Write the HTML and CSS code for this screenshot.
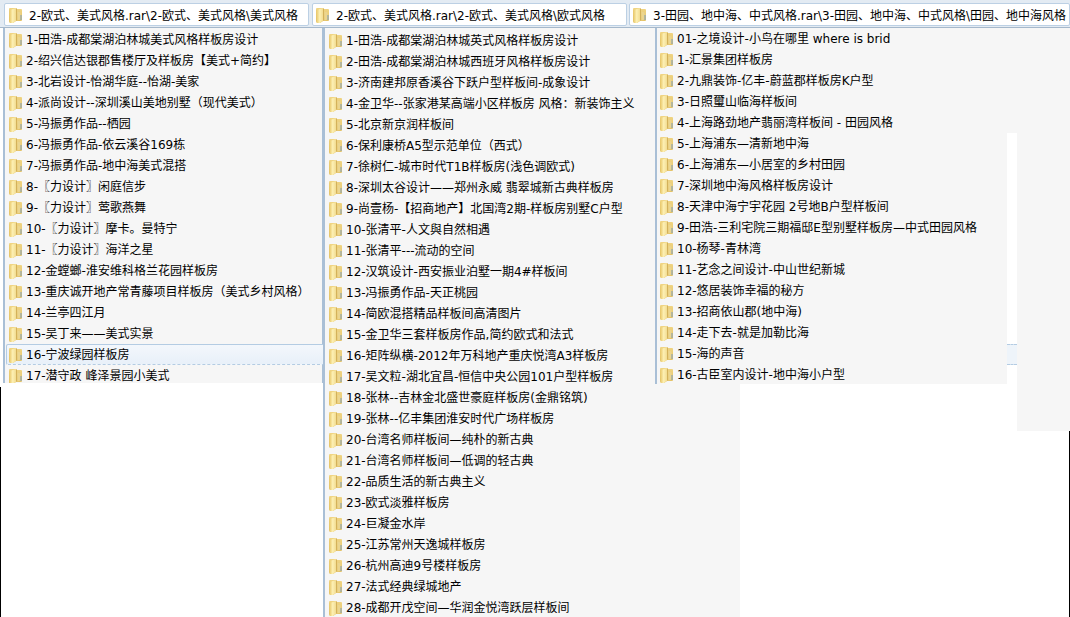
FILE: index.html
```html
<!DOCTYPE html>
<html lang="zh">
<head>
<meta charset="utf-8">
<title>Folders</title>
<link rel="stylesheet" href="styles.css">
</head>
<body>
<svg class="defs" width="0" height="0" aria-hidden="true">
  <defs>
    <linearGradient id="fg" x1="0" y1="0" x2="1" y2="0">
      <stop offset="0" stop-color="#e9c96c"/>
      <stop offset="0.45" stop-color="#fdf0b4"/>
      <stop offset="1" stop-color="#f0d98c"/>
    </linearGradient>
    <linearGradient id="bk" x1="0" y1="0" x2="0" y2="1">
      <stop offset="0" stop-color="#f0d584"/>
      <stop offset="1" stop-color="#e2c064"/>
    </linearGradient>
    <symbol id="folder" viewBox="0 0 13 16">
      <path d="M1 1h5.500l1 1H12a1 1 0 0 1 1 1v10a1 1 0 0 1-1 1H7l-3 2H2a2 2 0 0 1-2-2V2a1 1 0 0 1 1-1z" fill="url(#bk)"/>
      <path d="M0.500 3L7.500 1v12.500L4 16H2a1.500 1.500 0 0 1-1.500-1.500z" fill="url(#fg)"/>
      <path d="M7.500 1.500v12" stroke="#d3b15a" stroke-width="1"/>
      <path d="M8.500 4.500l3 1v7l-3 1z" fill="#ebd58f"/>
      <path d="M12 8v5" stroke="#7f9fbd" stroke-width="1"/>
    </symbol>
  </defs>
</svg>
<main class="desktop">
  <section class="window win-1">
    <header class="bar"><div class="tab"><svg class="ico"><use href="#folder"/></svg><span>2-欧式、美式风格.rar\2-欧式、美式风格\美式风格</span></div></header>
    <ul class="list">
      <li><svg class="ico"><use href="#folder"/></svg>1-田浩-成都棠湖泊林城美式风格样板房设计</li>
      <li><svg class="ico"><use href="#folder"/></svg>2-绍兴信达银郡售楼厅及样板房【美式+简约】</li>
      <li><svg class="ico"><use href="#folder"/></svg>3-北岩设计-怡湖华庭--怡湖-美家</li>
      <li><svg class="ico"><use href="#folder"/></svg>4-派尚设计--深圳溪山美地别墅（现代美式）</li>
      <li><svg class="ico"><use href="#folder"/></svg>5-冯振勇作品--栖园</li>
      <li><svg class="ico"><use href="#folder"/></svg>6-冯振勇作品-依云溪谷169栋</li>
      <li><svg class="ico"><use href="#folder"/></svg>7-冯振勇作品-地中海美式混搭</li>
      <li><svg class="ico"><use href="#folder"/></svg>8-〖力设计〗闲庭信步</li>
      <li><svg class="ico"><use href="#folder"/></svg>9-〖力设计〗莺歌燕舞</li>
      <li><svg class="ico"><use href="#folder"/></svg>10-〖力设计〗摩卡。曼特宁</li>
      <li><svg class="ico"><use href="#folder"/></svg>11-〖力设计〗海洋之星</li>
      <li><svg class="ico"><use href="#folder"/></svg>12-金螳螂-淮安维科格兰花园样板房</li>
      <li><svg class="ico"><use href="#folder"/></svg>13-重庆诚开地产常青藤项目样板房（美式乡村风格）</li>
      <li><svg class="ico"><use href="#folder"/></svg>14-兰亭四江月</li>
      <li><svg class="ico"><use href="#folder"/></svg>15-吴丁来——美式实景</li>
      <li class="hover"><svg class="ico"><use href="#folder"/></svg>16-宁波绿园样板房</li>
      <li><svg class="ico"><use href="#folder"/></svg>17-潜守政 峰泽景园小美式</li>
    </ul>
  </section>
  <section class="window win-2">
    <header class="bar"><div class="tab"><svg class="ico"><use href="#folder"/></svg><span>2-欧式、美式风格.rar\2-欧式、美式风格\欧式风格</span></div></header>
    <ul class="list">
      <li><svg class="ico"><use href="#folder"/></svg>1-田浩-成都棠湖泊林城英式风格样板房设计</li>
      <li><svg class="ico"><use href="#folder"/></svg>2-田浩-成都棠湖泊林城西班牙风格样板房设计</li>
      <li><svg class="ico"><use href="#folder"/></svg>3-济南建邦原香溪谷下跃户型样板间-成象设计</li>
      <li><svg class="ico"><use href="#folder"/></svg>4-金卫华--张家港某高端小区样板房 风格：新装饰主义</li>
      <li><svg class="ico"><use href="#folder"/></svg>5-北京新京润样板间</li>
      <li><svg class="ico"><use href="#folder"/></svg>6-保利康桥A5型示范单位（西式）</li>
      <li><svg class="ico"><use href="#folder"/></svg>7-徐树仁-城市时代T1B样板房(浅色调欧式)</li>
      <li><svg class="ico"><use href="#folder"/></svg>8-深圳太谷设计——郑州永威 翡翠城新古典样板房</li>
      <li><svg class="ico"><use href="#folder"/></svg>9-尚壹杨-【招商地产】北国湾2期-样板房别墅C户型</li>
      <li><svg class="ico"><use href="#folder"/></svg>10-张清平-人文與自然相遇</li>
      <li><svg class="ico"><use href="#folder"/></svg>11-张清平---流动的空间</li>
      <li><svg class="ico"><use href="#folder"/></svg>12-汉筑设计-西安振业泊墅一期4#样板间</li>
      <li><svg class="ico"><use href="#folder"/></svg>13-冯振勇作品-天正桃园</li>
      <li><svg class="ico"><use href="#folder"/></svg>14-简欧混搭精品样板间高清图片</li>
      <li><svg class="ico"><use href="#folder"/></svg>15-金卫华三套样板房作品,简约欧式和法式</li>
      <li><svg class="ico"><use href="#folder"/></svg>16-矩阵纵横-2012年万科地产重庆悦湾A3样板房</li>
      <li><svg class="ico"><use href="#folder"/></svg>17-吴文粒-湖北宜昌-恒信中央公园101户型样板房</li>
      <li><svg class="ico"><use href="#folder"/></svg>18-张林--吉林金北盛世豪庭样板房(金鼎铭筑)</li>
      <li><svg class="ico"><use href="#folder"/></svg>19-张林--亿丰集团淮安时代广场样板房</li>
      <li><svg class="ico"><use href="#folder"/></svg>20-台湾名师样板间—纯朴的新古典</li>
      <li><svg class="ico"><use href="#folder"/></svg>21-台湾名师样板间—低调的轻古典</li>
      <li><svg class="ico"><use href="#folder"/></svg>22-品质生活的新古典主义</li>
      <li><svg class="ico"><use href="#folder"/></svg>23-欧式淡雅样板房</li>
      <li><svg class="ico"><use href="#folder"/></svg>24-巨凝金水岸</li>
      <li><svg class="ico"><use href="#folder"/></svg>25-江苏常州天逸城样板房</li>
      <li><svg class="ico"><use href="#folder"/></svg>26-杭州高迪9号楼样板房</li>
      <li><svg class="ico"><use href="#folder"/></svg>27-法式经典绿城地产</li>
      <li><svg class="ico"><use href="#folder"/></svg>28-成都开戊空间—华润金悦湾跃层样板间</li>
    </ul>
  </section>
  <section class="window win-3">
    <header class="bar"><div class="tab"><svg class="ico"><use href="#folder"/></svg><span>3-田园、地中海、中式风格.rar\3-田园、地中海、中式风格\田园、地中海风格</span></div></header>
    <ul class="list">
      <li><svg class="ico"><use href="#folder"/></svg>01-之境设计-小鸟在哪里 where is brid</li>
      <li><svg class="ico"><use href="#folder"/></svg>1-汇景集团样板房</li>
      <li><svg class="ico"><use href="#folder"/></svg>2-九鼎装饰-亿丰-蔚蓝郡样板房K户型</li>
      <li><svg class="ico"><use href="#folder"/></svg>3-日照璽山临海样板间</li>
      <li><svg class="ico"><use href="#folder"/></svg>4-上海路劲地产翡丽湾样板间 - 田园风格</li>
      <li><svg class="ico"><use href="#folder"/></svg>5-上海浦东—清新地中海</li>
      <li><svg class="ico"><use href="#folder"/></svg>6-上海浦东—小居室的乡村田园</li>
      <li><svg class="ico"><use href="#folder"/></svg>7-深圳地中海风格样板房设计</li>
      <li><svg class="ico"><use href="#folder"/></svg>8-天津中海宁宇花园 2号地B户型样板间</li>
      <li><svg class="ico"><use href="#folder"/></svg>9-田浩-三利宅院三期福邸E型别墅样板房—中式田园风格</li>
      <li><svg class="ico"><use href="#folder"/></svg>10-杨琴-青林湾</li>
      <li><svg class="ico"><use href="#folder"/></svg>11-艺念之间设计-中山世纪新城</li>
      <li><svg class="ico"><use href="#folder"/></svg>12-悠居装饰幸福的秘方</li>
      <li><svg class="ico"><use href="#folder"/></svg>13-招商依山郡(地中海)</li>
      <li><svg class="ico"><use href="#folder"/></svg>14-走下去-就是加勒比海</li>
      <li><svg class="ico"><use href="#folder"/></svg>15-海的声音</li>
      <li><svg class="ico"><use href="#folder"/></svg>16-古臣室内设计-地中海小户型</li>
    </ul>
  </section>
  <div class="patch patch-white"><div class="row-trace"></div></div>
  <div class="patch patch-grey"></div>
  <div class="edge edge-left"></div>
  <div class="edge edge-right"></div>
</main>
</body>
</html>
```
FILE: styles.css
```css
* { box-sizing: border-box; }
html, body { margin: 0; padding: 0; }
body { width: 1070px; height: 617px; overflow: hidden; background: #fff; font-family: "DejaVu Sans", "Noto Sans CJK SC", sans-serif; color: #000; text-spacing-trim: space-all; }
.defs { position: absolute; }
.desktop { position: relative; width: 1070px; height: 617px; overflow: hidden; background: #fff; }

.window { position: absolute; top: 0; display: flex; flex-direction: column; overflow: hidden; }
.win-1 { left: 0; width: 323px; height: 383px; z-index: 1; }
.win-2 { left: 309px; width: 431px; height: 617px; z-index: 2; }
.win-3 { left: 627px; width: 443px; height: 384px; z-index: 3; }

.bar { flex: none; height: 28px; padding: 3px 0 2px; background: #e3ebf3; border-bottom: 1px solid #a5b8cb; }
.win-1 .bar { padding-left: 4px; padding-right: 14px; }
.win-2 .bar { padding-left: 3px; padding-right: 113px; }
.win-3 .bar { padding-left: 2px; }
.tab { height: 23px; display: flex; align-items: center; gap: 7px; padding-left: 4px; background: #fff; border: 1px solid #bcd0e4; border-radius: 2px; font-size: 12px; white-space: nowrap; overflow: hidden; }
.win-2 .tab, .win-3 .tab { padding-left: 3px; }

.ico { width: 13px; height: 16px; flex: none; }

.list { list-style: none; margin: 0; flex: 1; background: #f6f6f6; border-left: 2px solid #a9bfd6; overflow: hidden; }
.win-1 .list { margin-left: 3px; padding: 1px 0 0 4px; box-shadow: inset -1px 0 0 #a9bfd6; }
.win-2 .list { margin-left: 14px; padding: 2px 0 0 4px; }
.win-3 .list { margin-left: 28px; padding: 0 0 0 3px; }
.list li { height: 21px; padding-bottom: 2px; display: flex; align-items: center; gap: 4px; font-size: 12px; white-space: nowrap; }
.list li .ico { margin-top: 2px; }
.list li.hover { margin-left: -3px; padding-left: 2px; background: linear-gradient(#f3f7fc, #e8f0f9); border: 1px solid #b4cce3; border-bottom-style: dashed; border-right: 0; border-radius: 2px 0 0 2px; }

.patch { position: absolute; z-index: 4; top: 133px; height: 298px; }
.patch-white { left: 1007px; width: 10px; background: #fff; display: flex; flex-direction: column; padding-top: 211px; }
.patch-grey { left: 1017px; width: 53px; background: #f6f6f6; }
.row-trace { height: 21px; background: #eef4fa; border-top: 1px dashed #b4cce3; border-bottom: 1px dashed #b4cce3; }

.edge { position: absolute; z-index: 5; width: 1px; background: #000; }
.edge-left { left: 0; top: 387px; height: 230px; }
.edge-right { left: 1069px; top: 431px; height: 186px; }
```
